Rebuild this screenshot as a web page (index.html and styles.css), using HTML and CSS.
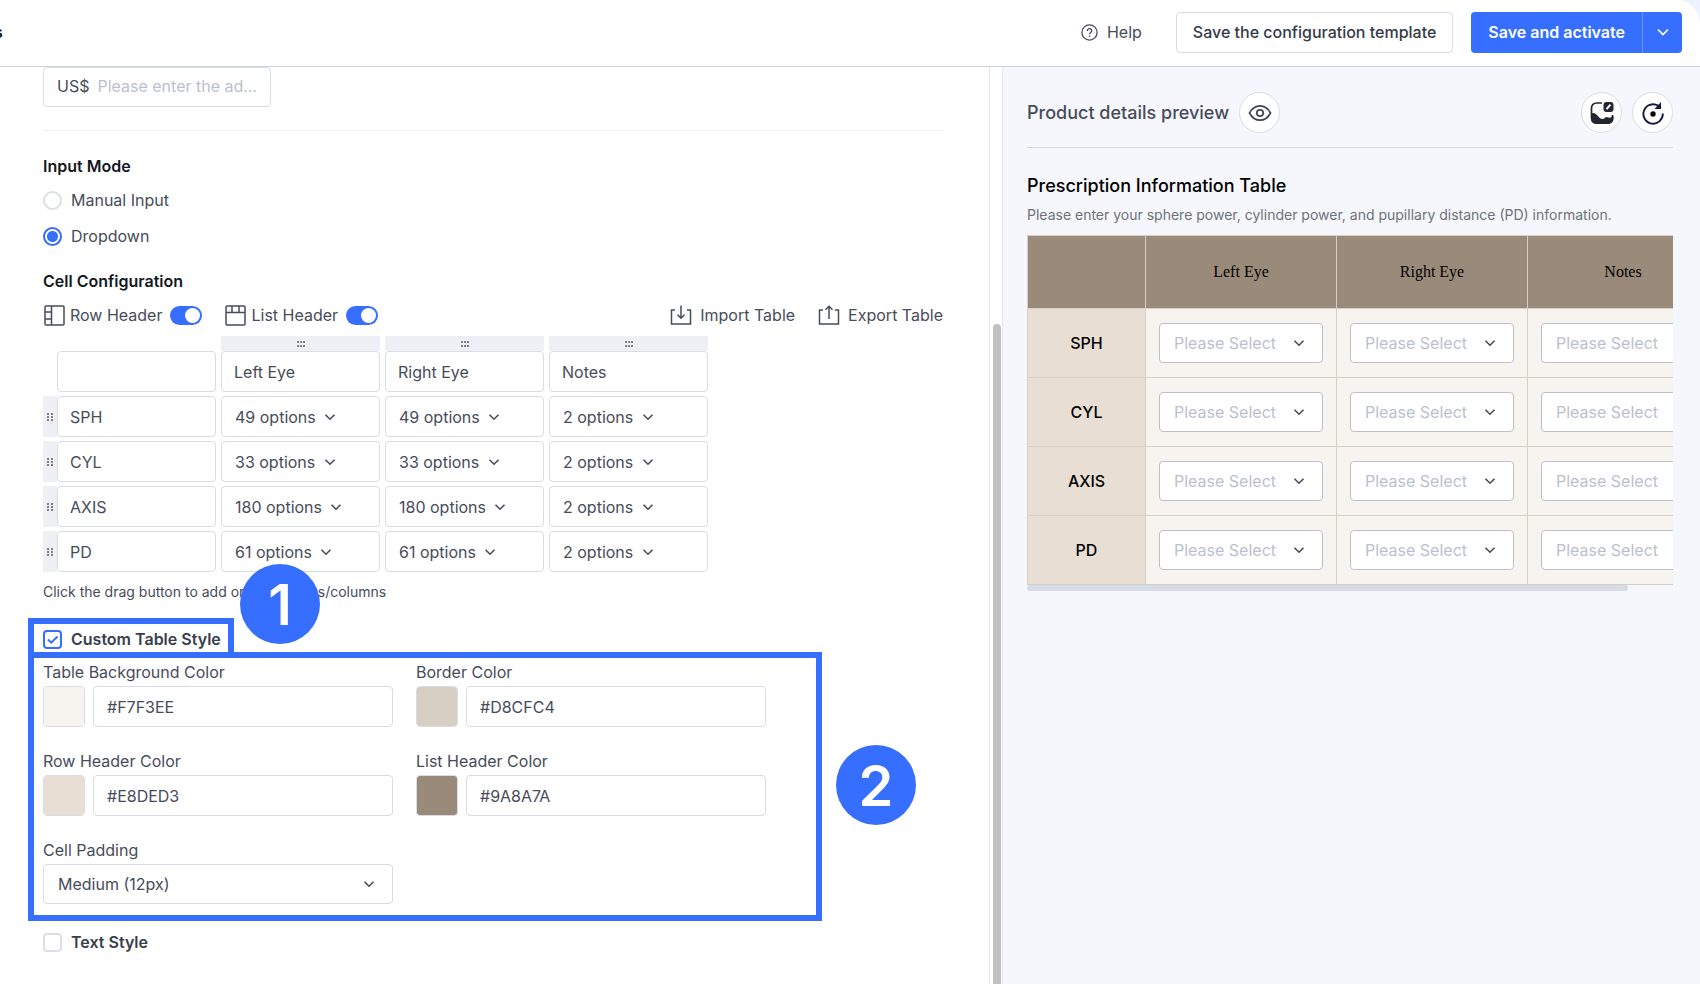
FILE: index.html
```html
<!DOCTYPE html>
<html lang="en">
<head>
  <meta charset="UTF-8">
  <meta name="viewport" content="width=device-width, initial-scale=1.0">
  <title>Prescription Information Table</title>
  <link rel="stylesheet" href="styles.css">
</head>
<body>

<header class="topbar">
  <span class="page-name">s</span>
  <a href="#" class="help">
    <svg width="17" height="17" viewBox="0 0 17 17" fill="none" stroke="currentColor" stroke-width="1.3"><circle cx="8.5" cy="8.5" r="7.6"/><path d="M6.3 6.9c0-1.3 1-2.2 2.2-2.2s2.2.9 2.2 2.1c0 1.5-2.2 1.7-2.2 3.4"/><path d="M8.5 11.4v1.4"/></svg>
    Help
  </a>
  <button type="button" class="btn">Save the configuration template</button>
  <div class="split">
    <button type="button" class="split-main">Save and activate</button>
    <button type="button" class="split-more" aria-label="More actions">
      <svg width="14" height="14" viewBox="0 0 14 14" fill="none" stroke="currentColor" stroke-width="1.7"><path d="M2 4.5l5 5 5-5"/></svg>
    </button>
  </div>
</header>

<main class="layout">
  <section class="editor">
    <div class="editor-body">
      <div class="price">
        <label for="price">US$</label>
        <input type="text" id="price" placeholder="Please enter the additional price">
      </div>

      <hr class="divider">

      <h2 class="heading">Input Mode</h2>
      <div class="modes">
        <label class="choice"><input type="radio" name="mode" class="radio">Manual Input</label>
        <label class="choice"><input type="radio" name="mode" class="radio" checked>Dropdown</label>
      </div>

      <h2 class="heading cell-heading">Cell Configuration</h2>
      <div class="toolbar">
        <label class="toggle">
          <svg width="21" height="21" viewBox="0 0 21 21" fill="none" stroke="currentColor" stroke-width="1.5"><rect x="1" y="1" width="19" height="19" rx="1"/><path d="M7.5 1v19M1 7h6.5M1 14h6.5"/></svg>
          Row Header
          <input type="checkbox" class="switch" checked>
        </label>
        <label class="toggle">
          <svg width="21" height="21" viewBox="0 0 21 21" fill="none" stroke="currentColor" stroke-width="1.5"><rect x="1" y="1" width="19" height="19" rx="1"/><path d="M1 7.5h19M7 1v6.5M14 1v6.5"/></svg>
          List Header
          <input type="checkbox" class="switch" checked>
        </label>
        <div class="transfer">
          <button type="button" class="link-btn">
            <svg width="22" height="20" viewBox="0 0 22 20" fill="none" stroke="currentColor" stroke-width="1.5"><path d="M5 5H1.5v14h19V5H17M11 .5V13M7.5 9.7l3.500 3.500 3.500-3.500"/></svg>
            Import Table
          </button>
          <button type="button" class="link-btn">
            <svg width="22" height="20" viewBox="0 0 22 20" fill="none" stroke="currentColor" stroke-width="1.5"><path d="M5 5H1.5v14h19V5H17M11 14V1.5M7.5 4.8L11 1.300l3.500 3.500"/></svg>
            Export Table
          </button>
        </div>
      </div>

      <table class="cells">
        <thead>
          <tr class="handles">
            <td></td><td></td>
            <td><span class="grip grip-x"></span></td>
            <td><span class="grip grip-x"></span></td>
            <td><span class="grip grip-x"></span></td>
          </tr>
        </thead>
        <tbody id="cells"></tbody>
      </table>
      <p class="hint">Click the drag button to add or delete rows/columns</p>

      <div class="style-block">
        <label class="choice strong"><input type="checkbox" class="check" checked>Custom Table Style</label>
        <div class="style-grid">
          <div class="field">
            <label for="bg">Table Background Color</label>
            <div class="color">
              <input type="color" value="#F7F3EE" aria-label="Pick table background color">
              <input type="text" id="bg" value="#F7F3EE">
            </div>
          </div>
          <div class="field">
            <label for="border">Border Color</label>
            <div class="color">
              <input type="color" value="#D8CFC4" aria-label="Pick border color">
              <input type="text" id="border" value="#D8CFC4">
            </div>
          </div>
          <div class="field">
            <label for="row">Row Header Color</label>
            <div class="color">
              <input type="color" value="#E8DED3" aria-label="Pick row header color">
              <input type="text" id="row" value="#E8DED3">
            </div>
          </div>
          <div class="field">
            <label for="list">List Header Color</label>
            <div class="color">
              <input type="color" value="#9A8A7A" aria-label="Pick list header color">
              <input type="text" id="list" value="#9A8A7A">
            </div>
          </div>
          <div class="field">
            <label for="padding">Cell Padding</label>
            <select id="padding" class="padding-select"><option>Medium (12px)</option></select>
          </div>
        </div>
        <div class="mark mark-title"></div>
        <div class="mark mark-fields"></div>
        <span class="step step-one">1</span>
        <span class="step step-two">2</span>
      </div>

      <label class="choice strong text-style"><input type="checkbox" class="check">Text Style</label>
    </div>
    <div class="rail"><div class="thumb"></div></div>
  </section>

  <section class="preview">
    <div class="preview-head">
      <h2>Product details preview</h2>
      <button type="button" class="round" aria-label="Preview">
        <svg width="24" height="18" viewBox="0 0 24 18" fill="none" stroke="#3f4654" stroke-width="1.7"><path d="M1.5 9C4 4.200 7.700 1.800 12 1.800S20 4.200 22.500 9C20 13.800 16.300 16.200 12 16.200S4 13.800 1.500 9z"/><circle cx="12" cy="9" r="3.2"/></svg>
      </button>
      <button type="button" class="round push" aria-label="Edit image">
        <svg width="24" height="24" viewBox="0 0 24 24"><path d="M12 2H6.500a5 5 0 0 0-5 5v10a5 5 0 0 0 5 5h11a5 5 0 0 0 5-5v-3" fill="none" stroke="#23262f" stroke-width="1.7"/><path d="M1 12.500c2.500-1.300 4.500-.5 6.500 2s3.500 4 5.500 3.500 2.500-2.300 4.300-1.800c2 .8 3.700.8 6.200-1.200V18a5 5 0 0 1-5 5h-12.500a5 5 0 0 1-5-5z" fill="#23262f"/><rect x="13.5" y="1" width="10" height="10" rx="3" fill="#23262f"/><path d="M16.500 8.200l4-4.500" stroke="#fff" stroke-width="2"/></svg>
      </button>
      <button type="button" class="round" aria-label="Reset">
        <svg width="24" height="24" viewBox="0 0 24 24"><path d="M21.800 12.500A9.700 9.700 0 1 1 17 4.600" fill="none" stroke="#141a3c" stroke-width="1.900"/><path d="M20 1v7h-6.500z" fill="#141a3c"/><circle cx="12" cy="13" r="2.7" fill="#000"/></svg>
      </button>
    </div>

    <h3 class="preview-title">Prescription Information Table</h3>
    <p class="preview-note">Please enter your sphere power, cylinder power, and pupillary distance (PD) information.</p>
    <div class="preview-scroll">
      <table class="rx">
        <thead>
          <tr><th class="corner"></th><th>Left Eye</th><th>Right Eye</th><th>Notes</th></tr>
        </thead>
        <tbody id="rx"></tbody>
      </table>
    </div>
    <div class="preview-bar"></div>
  </section>
</main>

<script src="script.js"></script>
</body>
</html>
```
FILE: styles.css
```css
* {
  box-sizing: border-box;
}
body {
  margin: 0;
  height: 100vh;
  display: flex;
  flex-direction: column;
  overflow: hidden;
  background-color: #eef2ff;
  font-family: Inter, "Liberation Sans", sans-serif;
  font-size: 16px;
  line-height: 24px;
  color: #474c5a;
}
h2, h3, p {
  margin: 0;
}
button, input, select {
  font: inherit;
  color: inherit;
  margin: 0;
}
button {
  cursor: pointer;
}
svg {
  display: block;
  flex: none;
}

/* Top bar */
.topbar {
  display: flex;
  align-items: center;
  flex: none;
  height: 67px;
  padding-right: 18px;
  padding-bottom: 2px;
  background-color: #fff;
  border-bottom: 1px solid #cdd1dc;
  border-top-right-radius: 24px;
}
.page-name {
  margin-left: -6px;
  margin-right: auto;
  font-weight: 600;
  color: #15171e;
}
.help {
  display: flex;
  align-items: center;
  gap: 9px;
  margin-right: 34px;
  color: inherit;
  text-decoration: none;
}
.btn {
  height: 41px;
  padding: 0 16px;
  margin-right: 18px;
  background-color: #fff;
  border: 1px solid #d9dce6;
  border-radius: 4px;
  font-weight: 500;
  color: #343a48;
}
.split {
  display: flex;
  height: 41px;
  border-radius: 4px;
  overflow: hidden;
}
.split button {
  background-color: #366eff;
  border: none;
  color: #fff;
  font-weight: 600;
}
.split-main {
  padding: 0 17px;
}
.split .split-more {
  width: 40px;
  padding: 0 13px;
  border-left: 1px solid #6c95ff;
}

/* Page columns */
.layout {
  flex: 1;
  min-height: 0;
  display: grid;
  grid-template-columns: 59fr 41fr;
}
.editor {
  display: flex;
  min-width: 0;
  background-color: #fff;
  overflow: hidden;
}
.editor-body {
  flex: 1;
  min-width: 0;
  padding: 0 46px 0 43px;
}
.rail {
  flex: none;
  display: flex;
  flex-direction: column;
  justify-content: flex-end;
  width: 14px;
  padding: 0 1px 0 3px;
  border-left: 1px solid #e9e9ec;
  border-right: 1px solid #e9e9ec;
}
.thumb {
  height: 72%;
  background-color: #c1c1c3;
  border-radius: 4px 4px 0 0;
}

/* Form controls */
.price {
  display: flex;
  align-items: center;
  gap: 8px;
  width: 228px;
  height: 40px;
  padding: 0 4px 2px 13px;
  border: 1px solid #d9dce6;
  border-radius: 4px;
}
.price input {
  flex: 1;
  min-width: 0;
  padding: 0;
  border: none;
  background: none;
  text-overflow: ellipsis;
}
.price input::placeholder {
  color: #bcc0cd;
}
.divider {
  height: 1px;
  margin: 23px 0;
  border: none;
  background-color: #eceef4;
}
.heading {
  font-size: 16px;
  font-weight: 600;
  color: #15171e;
}
.cell-heading {
  margin-top: 21px;
}
.modes {
  display: flex;
  flex-direction: column;
  gap: 12px;
  margin-top: 10px;
}
.choice {
  display: flex;
  align-items: center;
  gap: 9px;
}
.strong {
  font-weight: 600;
  color: #383e4c;
}
.radio, .check {
  appearance: none;
  flex: none;
  width: 19px;
  height: 19px;
  border: 2px solid #dcdfe8;
  border-radius: 50%;
  background-color: #fff;
}
.radio:checked {
  border-color: #366eff;
  background: radial-gradient(circle, #366eff 5px, #fff 6px);
}
.check {
  border-radius: 4px;
}
.check:checked {
  border-color: #366eff;
  background: url("data:image/svg+xml,%3Csvg xmlns='http://www.w3.org/2000/svg' viewBox='0 0 15 15' fill='none' stroke='%23366eff' stroke-width='2'%3E%3Cpath d='M3 7.500l3.200 3.200L12.500 4.500'/%3E%3C/svg%3E") center / 15px 15px no-repeat;
}
.toolbar {
  display: flex;
  align-items: center;
  gap: 23px;
  margin-top: 10px;
  padding-left: 1px;
}
.toggle {
  display: flex;
  align-items: center;
  gap: 5px;
}
.switch {
  appearance: none;
  flex: none;
  width: 32px;
  height: 19px;
  margin-left: 3px;
  padding: 2px;
  border-radius: 10px;
  background-color: #366eff;
}
.switch::before {
  content: "";
  display: block;
  width: 15px;
  height: 15px;
  margin-left: auto;
  border-radius: 50%;
  background-color: #fff;
}
.transfer {
  display: flex;
  gap: 23px;
  margin-left: auto;
}
.link-btn {
  display: flex;
  align-items: center;
  gap: 8px;
  padding: 0;
  border: none;
  background: none;
}

/* Cell table */
.cells {
  margin-top: 9px;
  border-collapse: collapse;
  table-layout: fixed;
  width: 670px;
}
.cells td, .cells th {
  padding: 0 5px 4px 0;
  text-align: left;
  font-weight: 400;
}
.cells td:first-child {
  width: 14px;
  padding-right: 0;
}
.cells .handles td {
  padding-bottom: 0;
}
.grip {
  display: block;
  background-color: #eff0f6;
  background-position: center;
  background-repeat: no-repeat;
}
.grip-x {
  height: 15px;
  background-image: url("data:image/svg+xml,%3Csvg xmlns='http://www.w3.org/2000/svg' width='8' height='6' fill='%237c808c'%3E%3Cpath d='M0 0h2v2H0zM3 0h2v2H3zM6 0h2v2H6zM0 4h2v2H0zM3 4h2v2H3zM6 4h2v2H6z'/%3E%3C/svg%3E");
}
.grip-y {
  height: 41px;
  background-image: url("data:image/svg+xml,%3Csvg xmlns='http://www.w3.org/2000/svg' width='6' height='8' fill='%237c808c'%3E%3Cpath d='M0 0h2v2H0zM0 3h2v2H0zM0 6h2v2H0zM4 0h2v2H4zM4 3h2v2H4zM4 6h2v2H4z'/%3E%3C/svg%3E");
}
.cell {
  display: block;
  width: 100%;
  height: 41px;
  padding: 0 12px;
  background-color: #fff;
  border: 1px solid #d9dce6;
  border-radius: 4px;
}
.cell select {
  appearance: none;
  height: 39px;
  padding: 0 20px 0 1px;
  border: none;
  background: none;
}
.cell select, .padding-select, .rx select {
  background-image: url("data:image/svg+xml,%3Csvg xmlns='http://www.w3.org/2000/svg' width='12' height='12' fill='none' stroke='%23474c5a' stroke-width='1.600'%3E%3Cpath d='M1.500 3.700L6 8.200l4.500-4.500'/%3E%3C/svg%3E");
  background-repeat: no-repeat;
  background-position: right center;
}
.hint {
  margin-top: 6px;
  font-size: 14px;
  line-height: 20px;
}

/* Table style */
.style-block {
  position: relative;
  margin-top: 25px;
}
.style-grid {
  display: grid;
  grid-template-columns: 350px 350px;
  gap: 22px 23px;
  margin-top: 9px;
}
.field {
  display: flex;
  flex-direction: column;
  gap: 2px;
}
.color {
  display: flex;
  gap: 8px;
}
.color input[type="color"] {
  appearance: none;
  flex: none;
  width: 42px;
  height: 41px;
  padding: 0;
  border: 1px solid #d9dce6;
  border-radius: 4px;
  overflow: hidden;
}
.color input[type="color"]::-webkit-color-swatch-wrapper {
  padding: 0;
}
.color input[type="color"]::-webkit-color-swatch {
  border: none;
}
.color input[type="text"] {
  flex: 1;
  min-width: 0;
  height: 41px;
  padding: 0 13px;
  border: 1px solid #d9dce6;
  border-radius: 4px;
}
.padding-select {
  appearance: none;
  height: 40px;
  padding: 0 14px;
  background-color: #fff;
  background-position: right 17px center;
  border: 1px solid #d9dce6;
  border-radius: 4px;
}
.text-style {
  margin-top: 26px;
}

/* Step marks drawn over the form */
.mark {
  position: absolute;
  left: -15px;
  border: 6px solid #366eff;
  pointer-events: none;
}
.mark-title {
  top: -9px;
  width: 206px;
  height: 40px;
}
.mark-fields {
  top: 25px;
  bottom: -17px;
  width: 794px;
}
.step {
  position: absolute;
  width: 80px;
  height: 80px;
  border-radius: 50%;
  background-color: #366eff;
  color: #fff;
  font-size: 56px;
  font-weight: 600;
  line-height: 82px;
  text-align: center;
}
.step-one {
  top: -63px;
  left: 197px;
}
.step-two {
  top: 118px;
  left: 793px;
}

/* Preview */
.preview {
  min-width: 0;
  padding: 25px 27px 0 24px;
  background-color: #f5f7fc;
}
.preview-head {
  display: flex;
  align-items: center;
  gap: 10px;
  padding-bottom: 14px;
  border-bottom: 1px solid #d3d8e2;
}
.preview-head h2 {
  font-size: 18px;
  font-weight: 500;
}
.round {
  display: flex;
  align-items: center;
  justify-content: center;
  width: 41px;
  height: 41px;
  padding: 0;
  background-color: #fff;
  border: 1px solid #d9dce6;
  border-radius: 50%;
}
.push {
  margin-left: auto;
}
.preview-title {
  margin-top: 26px;
  font-size: 18px;
  font-weight: 500;
  color: #000;
}
.preview-note {
  margin-top: 7px;
  font-size: 14px;
  line-height: 20px;
  color: #6e717b;
}
.preview-scroll {
  margin-top: 10px;
  overflow: hidden;
}
.rx {
  border-collapse: collapse;
  table-layout: fixed;
  width: 692px;
  background-color: #f7f3ee;
  color: #000;
}
.rx th, .rx td {
  height: 69px;
  padding: 0 13px;
  border: 1px solid #d8cfc4;
}
.rx thead th {
  height: 73px;
  background-color: #9a8a7a;
  font-family: "Liberation Serif", serif;
  font-weight: 400;
}
.rx .corner {
  width: 118px;
}
.rx tbody th {
  background-color: #e8ded3;
  font-weight: 500;
}
.rx select {
  appearance: none;
  display: block;
  width: 100%;
  height: 40px;
  padding: 0 14px;
  background-color: #fff;
  background-position: right 17px center;
  border: 1px solid #bcc0cd;
  border-radius: 4px;
  color: #bcc0cd;
}
.preview-bar {
  width: 93%;
  height: 6px;
  border-radius: 3px;
  background-color: #d6dce5;
}
```
FILE: script.js
```js
const columns = ['Left Eye', 'Right Eye', 'Notes'];
const rows = [
  { name: 'SPH', options: [49, 49, 2] },
  { name: 'CYL', options: [33, 33, 2] },
  { name: 'AXIS', options: [180, 180, 2] },
  { name: 'PD', options: [61, 61, 2] }
];

// Editable table: a header row, then one row per prescription value
let cells = '<tr><td></td><td><input type="text" class="cell" aria-label="Corner cell"></td>';
columns.forEach(name => {
  cells += `<td><input type="text" class="cell" value="${name}" aria-label="Column name"></td>`;
});
cells += '</tr>';
rows.forEach(row => {
  cells += `<tr><td><span class="grip grip-y"></span></td>
    <td><input type="text" class="cell" value="${row.name}" aria-label="Row name"></td>`;
  row.options.forEach((count, i) => {
    cells += `<td><div class="cell"><select aria-label="${row.name} ${columns[i]}"><option>${count} options</option></select></div></td>`;
  });
  cells += '</tr>';
});
document.getElementById('cells').innerHTML = cells;

// Preview table
document.getElementById('rx').innerHTML = rows.map(row =>
  `<tr><th>${row.name}</th>` + columns.map(name =>
    `<td><select aria-label="${row.name} ${name}"><option>Please Select</option></select></td>`
  ).join('') + '</tr>'
).join('');
```
